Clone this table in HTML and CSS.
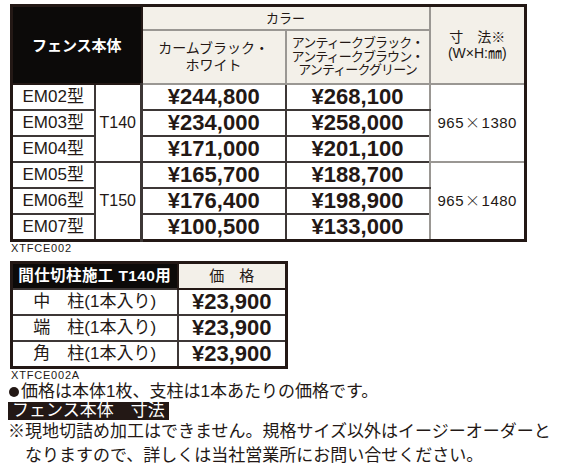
FILE: index.html
```html
<!DOCTYPE html>
<html lang="ja">
<head>
    <meta charset="UTF-8">
    <title>フェンス本体 価格表</title>
    <link rel="stylesheet" href="styles.css">
</head>
<body>
    <div class="page">
        <table class="price-table">
            <colgroup>
                <col class="c-model">
                <col class="c-height">
                <col class="c-price">
                <col class="c-price">
                <col class="c-size">
            </colgroup>
            <tr class="head-top">
                <th class="title" rowspan="2" colspan="2">フェンス本体</th>
                <th class="color-head" colspan="2">カラー</th>
                <th class="size-head" rowspan="2">寸　法※<br>(W×H:㎜)</th>
            </tr>
            <tr class="head-sub">
                <th class="color-a">カームブラック・<br>ホワイト</th>
                <th class="color-b">アンティークブラック・<br>アンティークブラウン・<br>アンティークグリーン</th>
            </tr>
            <tr class="first">
                <td class="model">EM02型</td>
                <td class="height" rowspan="3">T140</td>
                <td class="price">¥244,800</td>
                <td class="price b">¥268,100</td>
                <td class="size" rowspan="3">965<span class="x">×</span>1380</td>
            </tr>
            <tr>
                <td class="model">EM03型</td>
                <td class="price">¥234,000</td>
                <td class="price b">¥258,000</td>
            </tr>
            <tr>
                <td class="model">EM04型</td>
                <td class="price">¥171,000</td>
                <td class="price b">¥201,100</td>
            </tr>
            <tr class="group">
                <td class="model">EM05型</td>
                <td class="height" rowspan="3">T150</td>
                <td class="price">¥165,700</td>
                <td class="price b">¥188,700</td>
                <td class="size" rowspan="3">965<span class="x">×</span>1480</td>
            </tr>
            <tr>
                <td class="model">EM06型</td>
                <td class="price">¥176,400</td>
                <td class="price b">¥198,900</td>
            </tr>
            <tr>
                <td class="model">EM07型</td>
                <td class="price">¥100,500</td>
                <td class="price b">¥133,000</td>
            </tr>
        </table>
        <p class="code">XTFCE002</p>

        <table class="post-table">
            <colgroup>
                <col class="c-post">
                <col class="c-post-price">
            </colgroup>
            <tr>
                <th class="title small">間仕切柱施工 T140用</th>
                <th class="price-head">価　格</th>
            </tr>
            <tr>
                <td class="post">中　柱(1本入り)</td>
                <td class="price">¥23,900</td>
            </tr>
            <tr>
                <td class="post">端　柱(1本入り)</td>
                <td class="price">¥23,900</td>
            </tr>
            <tr>
                <td class="post">角　柱(1本入り)</td>
                <td class="price">¥23,900</td>
            </tr>
        </table>
        <p class="code">XTFCE002A</p>

        <p class="note bullet">価格は本体1枚、支柱は1本あたりの価格です。</p>
        <p class="note heading"><span class="label">フェンス本体　寸法</span></p>
        <p class="note remark">※現地切詰め加工はできません。規格サイズ以外はイージーオーダーとなりますので、詳しくは当社営業所にお問い合せください。</p>
    </div>
</body>
</html>
```

FILE: styles.css
```css
body {
    margin: 0;
    background: #fff;
    color: #231815;
    font-family: "Liberation Sans", "Noto Sans CJK JP", sans-serif;
}
.page {
    padding: 4px 8px 0 10px;
}
p {
    margin: 0;
}

/* fence price table */
.price-table,
.post-table {
    border-collapse: collapse;
    table-layout: fixed;
    border: 3px solid #231815;
}
.price-table th,
.price-table td,
.post-table th,
.post-table td {
    padding: 0;
    text-align: center;
    vertical-align: middle;
}
.c-model { width: 83px; }
.c-height { width: 47px; }
.c-price { width: 144px; }
.c-size { width: 96px; }

.price-table th {
    background: #f3f0e9;
    border: 2px solid #9a9793;
    font-weight: normal;
}
.price-table th.title,
.post-table th.title {
    background: #0c0a09;
    color: #fff;
    border-color: #231815;
    font-weight: bold;
    font-size: 15px;
}
.head-top {
    height: 24px;
}
.head-sub {
    height: 54px;
}
.color-head {
    font-size: 13px;
}
.color-a {
    font-size: 14px;
    line-height: 17px;
}
.color-b {
    font-size: 13px;
    line-height: 13.5px;
    letter-spacing: -0.9px;
}
.size-head {
    font-size: 14px;
    line-height: 16px;
}
.price-table tr.first td,
.price-table tr.group td {
    border-top: 2px solid #3d3736;
}
.price-table td {
    height: 24px;
    line-height: 22px;
    border: 2px solid #3d3736;
}
.model {
    font-size: 17px;
}
.height {
    font-size: 16px;
    border-right-width: 3px !important;
}
.price {
    font-size: 22px;
    font-weight: bold;
    line-height: 22px;
}
.price-table td.price.b {
    border-right-color: #9a9793;
}
.price-table td.size {
    border-color: #9a9793 !important;
    font-size: 15px;
    letter-spacing: 0.5px;
}
.x {
    font-family: "Noto Sans CJK JP", sans-serif;
    font-weight: 300;
    padding: 0 1px;
}

.code {
    font-size: 11px;
    letter-spacing: 0.8px;
    line-height: 13px;
    margin-left: 1px;
}

/* intermediate post table */
.post-table {
    margin-top: 6px;
}
.c-post { width: 166px; }
.c-post-price { width: 109px; }
.post-table th,
.post-table td {
    height: 24px;
    line-height: 22px;
}
.post-table th.title {
    font-size: 15.5px;
    letter-spacing: 0.4px;
}
.post-table th.price-head {
    background: #f3f0e9;
    border: 2px solid #231815;
    font-weight: normal;
    font-size: 15px;
}
.post-table td {
    border: 2px solid #3d3736;
}
.post {
    font-size: 17px;
}

/* notes */
.note {
    font-size: 17px;
    margin-left: -2px;
}
.bullet {
    line-height: 21px;
    margin-top: -1px;
}
.bullet::before {
    content: "";
    display: inline-block;
    width: 10px;
    height: 10px;
    margin: 0 2px 0 1px;
    border-radius: 50%;
    background: #231815;
}
.heading {
    line-height: 20px;
    display: flex;
}
.label {
    background: #231815;
    color: #fff;
    line-height: 18px;
    padding: 0 4px;
}
.remark {
    line-height: 24px;
    padding-left: 1em;
    text-indent: -1em;
}
```
